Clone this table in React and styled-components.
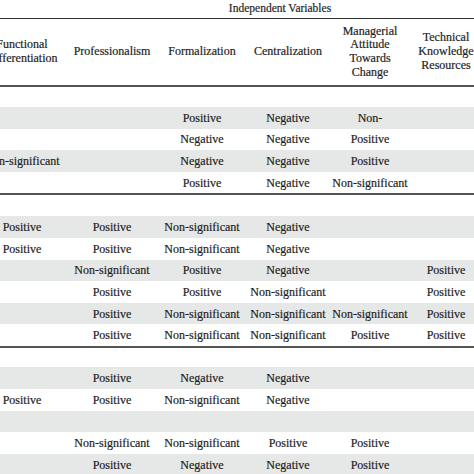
import React from 'react';
import styled, { createGlobalStyle } from 'styled-components';

const GlobalStyle = createGlobalStyle`
  html, body {
    margin: 0;
    padding: 0;
    background: #ffffff;
  }
  body {
    font-family: 'Liberation Serif', 'Times New Roman', serif;
    color: #1e1e1e;
  }
`;

const headers = [
  ['Functional', 'Differentiation'],
  ['Professionalism'],
  ['Formalization'],
  ['Centralization'],
  ['Managerial', 'Attitude', 'Towards', 'Change'],
  ['Technical', 'Knowledge', 'Resources'],
];

const sections = [
  {
    gap: 20,
    rows: [
      ['', '', 'Positive', 'Negative', 'Non-', ''],
      ['', '', 'Negative', 'Negative', 'Positive', ''],
      ['Non-significant', '', 'Negative', 'Negative', 'Positive', ''],
      ['', '', 'Positive', 'Negative', 'Non-significant', ''],
    ],
  },
  {
    gap: 21,
    rows: [
      ['Positive', 'Positive', 'Non-significant', 'Negative', '', ''],
      ['Positive', 'Positive', 'Non-significant', 'Negative', '', ''],
      ['', 'Non-significant', 'Positive', 'Negative', '', 'Positive'],
      ['', 'Positive', 'Positive', 'Non-significant', '', 'Positive'],
      ['', 'Positive', 'Non-significant', 'Non-significant', 'Non-significant', 'Positive'],
      ['', 'Positive', 'Non-significant', 'Non-significant', 'Positive', 'Positive'],
    ],
  },
  {
    gap: 19.5,
    rows: [
      ['', 'Positive', 'Negative', 'Negative', '', ''],
      ['Positive', 'Positive', 'Non-significant', 'Negative', '', ''],
      ['', '', '', '', '', ''],
      ['', 'Non-significant', 'Non-significant', 'Positive', 'Positive', ''],
      ['', 'Positive', 'Negative', 'Negative', 'Positive', ''],
    ],
  },
];

function App() {
  return (
    <>
      <GlobalStyle />
      <Page>
        <Table>
          <TitleRow>
            <Title>Independent Variables</Title>
          </TitleRow>
          <HeaderRow>
            {headers.map((lines, i) => (
              <HeadCell key={i}>
                {lines.map((l) => (
                  <span key={l}>{l}</span>
                ))}
              </HeadCell>
            ))}
          </HeaderRow>
          {sections.map((section, s) => (
            <Section key={s}>
              <Spacer $h={section.gap} />
              {section.rows.map((row, r) => (
                <Row key={r} $shaded={r % 2 === 0}>
                  {row.map((value, c) => (
                    <Cell key={c}>{value}</Cell>
                  ))}
                </Row>
              ))}
            </Section>
          ))}
        </Table>
      </Page>
    </>
  );
}

export default App;

const columns = '90px 90px 90px 82px 82px 70px';

const Page = styled.div`
  width: 474px;
  height: 474px;
  overflow: hidden;
  background: #ffffff;
`;

const Table = styled.div`
  width: 504px;
  margin-left: -23px;
  font-size: 12px;
  -webkit-text-stroke: 0.2px #1e1e1e;
`;

const TitleRow = styled.div`
  display: grid;
  grid-template-columns: ${columns};
  height: 18px;
  align-items: center;
`;

const Title = styled.div`
  grid-column: 2 / -1;
  text-align: center;
  font-size: 11.5px;
  padding-left: 12px;
  line-height: 14px;
  margin-top: -3px;
`;

const HeaderRow = styled.div`
  display: grid;
  grid-template-columns: ${columns};
  height: 66px;
  border-top: 1px solid #333;
  border-bottom: 2px solid #555;
  align-items: center;
`;

const HeadCell = styled.div`
  display: flex;
  flex-direction: column;
  align-items: center;
  text-align: center;
  line-height: 13.7px;
  white-space: nowrap;
`;

const Section = styled.div`
  border-bottom: 2px solid #555;
`;

const Spacer = styled.div`
  height: ${({ $h }) => $h}px;
`;

const Row = styled.div`
  display: grid;
  grid-template-columns: ${columns};
  height: 21.6px;
  align-items: center;
  background: ${({ $shaded }) => ($shaded ? '#e6e8e7' : '#ffffff')};
`;

const Cell = styled.div`
  text-align: center;
  white-space: nowrap;
  line-height: 14px;
`;
